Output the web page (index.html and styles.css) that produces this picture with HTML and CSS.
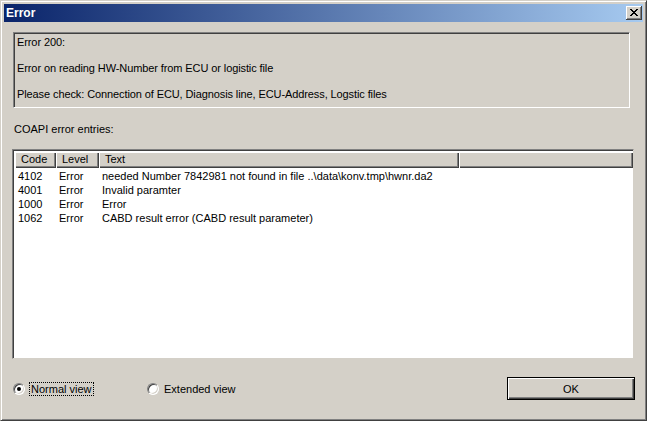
FILE: index.html
```html
<!DOCTYPE html>
<html lang="en">
<head>
    <meta charset="UTF-8">
    <title>Error</title>
    <link rel="stylesheet" href="styles.css">
</head>
<body>
    <div class="window">
        <div class="titlebar">
            <span class="title">Error</span>
            <span class="close">
                <svg width="8" height="7" viewBox="0 0 8 7">
                    <path d="M0 0h2v1h-2zM6 0h2v1h-2zM1 1h2v1h-2zM5 1h2v1h-2zM2 2h4v1h-4zM3 3h2v1h-2zM2 4h4v1h-4zM1 5h2v1h-2zM5 5h2v1h-2zM0 6h2v1h-2zM6 6h2v1h-2z" fill="#000"/>
                </svg>
            </span>
        </div>

        <div class="content">
            <div class="message">
                <p>Error 200:</p>
                <p>Error on reading HW-Number from ECU or logistic file</p>
                <p>Please check: Connection of ECU, Diagnosis line, ECU-Address, Logstic files</p>
            </div>

            <div class="caption">COAPI error entries:</div>

            <div class="list">
                <div class="row header">
                    <div class="col code">Code</div>
                    <div class="col level">Level</div>
                    <div class="col text">Text</div>
                    <div class="col rest"></div>
                </div>
                <div class="row">
                    <div class="col code">4102</div>
                    <div class="col level">Error</div>
                    <div class="col text">needed Number 7842981 not found in file ..\data\konv.tmp\hwnr.da2</div>
                </div>
                <div class="row">
                    <div class="col code">4001</div>
                    <div class="col level">Error</div>
                    <div class="col text">Invalid paramter</div>
                </div>
                <div class="row">
                    <div class="col code">1000</div>
                    <div class="col level">Error</div>
                    <div class="col text">Error</div>
                </div>
                <div class="row">
                    <div class="col code">1062</div>
                    <div class="col level">Error</div>
                    <div class="col text">CABD result error (CABD result parameter)</div>
                </div>
            </div>

            <div class="footer">
                <label class="radio normal"><span class="dot checked"></span><span class="focus">Normal view</span></label>
                <label class="radio"><span class="dot"></span><span>Extended view</span></label>
                <button class="ok">OK</button>
            </div>
        </div>
    </div>
</body>
</html>
```

FILE: styles.css
```css
body {
    margin: 0;
    background-color: #d4d0c8;
    font-family: "Liberation Sans", Arial, sans-serif;
    font-size: 11px;
    color: #000;
}

.window {
    width: 647px;
    height: 421px;
    box-sizing: border-box;
    background-color: #d4d0c8;
    border-top: 1px solid #d4d0c8;
    border-left: 1px solid #d4d0c8;
    border-right: 1px solid #404040;
    border-bottom: 1px solid #404040;
    box-shadow: inset 1px 1px #fff, inset -1px -1px #808080;
    padding: 3px;
}

.titlebar {
    height: 18px;
    background: linear-gradient(to right, #0a246a, #a6caf0);
    display: flex;
    align-items: center;
    justify-content: space-between;
    padding: 0 1px 0 2px;
}

.title {
    color: #fff;
    font-weight: bold;
    font-size: 12px;
}

.close {
    width: 16px;
    height: 14px;
    box-sizing: border-box;
    background-color: #d4d0c8;
    border-right: 1px solid #404040;
    border-bottom: 1px solid #404040;
    box-shadow: inset 1px 1px #fff, inset -1px -1px #808080;
    display: flex;
    align-items: center;
    justify-content: center;
}

.content {
    padding: 10px 10px 0 8px;
}

.message {
    width: 617px;
    height: 76px;
    box-sizing: border-box;
    margin-left: 1px;
    border-top: 1px solid #808080;
    border-left: 1px solid #808080;
    border-right: 1px solid #fff;
    border-bottom: 1px solid #fff;
    box-shadow: inset 1px 1px #404040;
    padding: 3px 0 0 3px;
    letter-spacing: -0.1px;
}

.message p {
    margin: 0 0 13px 0;
    height: 13px;
    line-height: 13px;
}

.caption {
    margin: 15px 0 0 2px;
    height: 13px;
    line-height: 13px;
}

.list {
    margin-top: 13px;
    width: 622px;
    height: 210px;
    box-sizing: border-box;
    background-color: #fff;
    border-top: 1px solid #808080;
    border-left: 1px solid #808080;
    border-right: 1px solid #d4d0c8;
    border-bottom: 1px solid #d4d0c8;
    box-shadow: inset 1px 1px #404040;
    padding: 2px 0 0 2px;
}

.row {
    display: flex;
    height: 14px;
    line-height: 14px;
}

.row .col {
    padding-left: 3px;
    box-sizing: border-box;
    white-space: nowrap;
}

.code { width: 41px; }
.level { width: 43px; }
.text { width: 361px; }
.rest { width: 174px; }

.header {
    height: 16px;
    line-height: 15px;
    margin-bottom: 1px;
}

.header .col {
    background-color: #d4d0c8;
    height: 16px;
    box-shadow: inset 1px 1px #fff, inset -1px -1px #404040, inset -2px -2px #808080;
    padding-left: 6px;
}

.footer {
    display: flex;
    align-items: center;
    margin-top: 18px;
    height: 23px;
}

.radio {
    display: flex;
    align-items: center;
    gap: 5px;
    margin-left: 1px;
}

.radio.normal {
    width: 133px;
}

.dot {
    width: 12px;
    height: 12px;
    box-sizing: border-box;
    border-radius: 50%;
    background-color: #fff;
    border-top: 1px solid #808080;
    border-left: 1px solid #808080;
    border-right: 1px solid #fff;
    border-bottom: 1px solid #fff;
    box-shadow: inset 1px 1px #404040, inset -1px -1px #d4d0c8;
    position: relative;
}

.dot.checked::after {
    content: "";
    position: absolute;
    left: 3px;
    top: 3px;
    width: 4px;
    height: 4px;
    border-radius: 50%;
    background-color: #000;
}

.focus {
    outline: 1px dotted #000;
    outline-offset: 0;
    padding: 0 1px;
}

.ok {
    margin-left: auto;
    margin-right: -2px;
    width: 128px;
    height: 23px;
    background-color: #d4d0c8;
    border: 1px solid #000;
    box-shadow: inset 1px 1px #fff, inset -1px -1px #404040, inset -2px -2px #808080;
    font-family: "Liberation Sans", Arial, sans-serif;
    font-size: 11px;
    color: #000;
    padding: 0;
}
```
